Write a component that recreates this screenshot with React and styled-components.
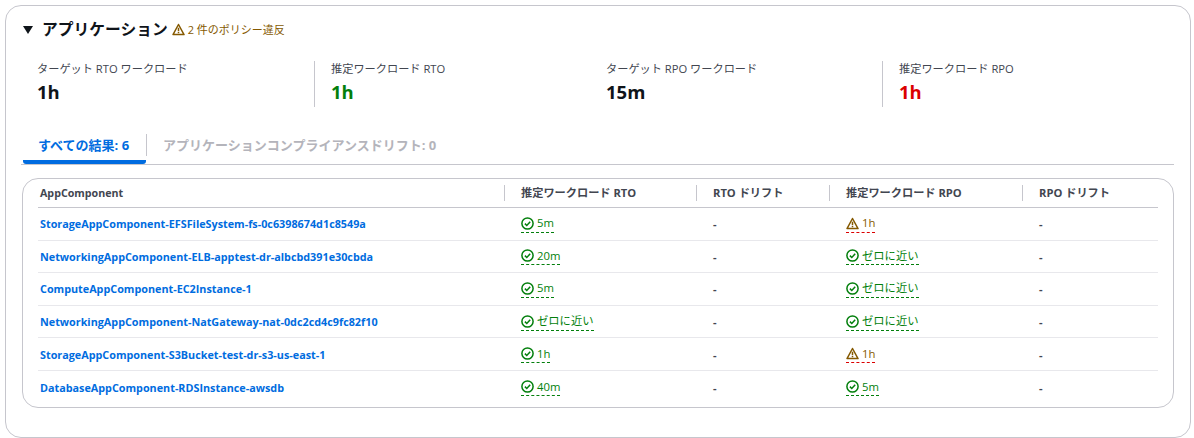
import React from 'react';
import styled, { createGlobalStyle } from 'styled-components';

const GlobalStyle = createGlobalStyle`
    html, body { margin: 0; padding: 0; background: #fff; }
    body {
        font-family: "Open Sans", "Noto Sans CJK JP", sans-serif;
        color: #0f141a;
    }
`;

const Card = styled.section`
    box-sizing: border-box;
    width: 1186px;
    height: 433px;
    margin: 5px 0 0 5px;
    padding: 13px 16px 0 16px;
    border: 1px solid #c6c6cd;
    border-radius: 16px;
`;

const Header = styled.header`
    display: flex;
    align-items: center;
    height: 20px;
`;

const Caret = styled.span`
    width: 0;
    height: 0;
    margin: 1px 9px 0 1px;
    border-left: 5px solid transparent;
    border-right: 5px solid transparent;
    border-top: 8px solid #0f141a;
`;

const Title = styled.h2`
    margin: 0 4px 0 0;
    font-size: 15.75px;
    font-weight: 700;
    line-height: 20px;
`;

const Violation = styled.span`
    display: flex;
    align-items: center;
    gap: 3px;
    font-size: 11px;
    color: #855900;
`;

const Metrics = styled.div`
    display: grid;
    grid-template-columns: 294px 275px 293px 1fr;
    margin: 22px 0 0 15px;
    height: 46px;
`;

const Metric = styled.div`
    box-sizing: border-box;
    height: 46px;
    padding-left: ${p => (p.$divided ? '16px' : '0')};
    border-left: ${p => (p.$divided ? '1px solid #c6c6cd' : 'none')};
    margin-left: ${p => (p.$divided ? '-17px' : '0')};
`;

const MetricLabel = styled.div`
    font-size: 11.2px;
    line-height: 16px;
    color: #424650;
    white-space: nowrap;
`;

const MetricValue = styled.div`
    margin-top: 4px;
    font-size: 18.5px;
    font-weight: 700;
    line-height: 22px;
    color: ${p => p.$color || '#0f141a'};
`;

const Tabs = styled.nav`
    display: flex;
    align-items: flex-start;
    height: 37px;
    margin: 20px 0 0 -1px;
    border-bottom: 1px solid #c6c6cd;
`;

const Tab = styled.div`
    box-sizing: border-box;
    height: 37px;
    margin-left: ${p => (p.$active ? '2px' : '0')};
    padding: 8px 16px 0;
    padding-left: ${p => (p.$active ? '15px' : '16px')};
    padding-right: ${p => (p.$active ? '17px' : '16px')};
    font-size: 13px;
    font-weight: 700;
    line-height: 20px;
    white-space: nowrap;
    color: ${p => (p.$active ? '#006ce0' : '#b4b4bb')};
    border-bottom: ${p => (p.$active ? '4px solid #006ce0' : 'none')};
    border-radius: ${p => (p.$active ? '0 0 3px 3px' : '0')};
`;

const TabDivider = styled.span`
    flex: none;
    width: 1px;
    height: 22px;
    margin-top: 7px;
    background: #c6c6cd;
`;

const TableBox = styled.div`
    box-sizing: border-box;
    width: 1152px;
    height: 230px;
    margin-top: 13px;
    padding: 0 15px;
    border: 1px solid #c6c6cd;
    border-radius: 16px;
`;

const columns = '466px 192px 133px 193px 1fr';

const HeadRow = styled.div`
    display: grid;
    grid-template-columns: ${columns};
    align-items: center;
    height: 28px;
    border-bottom: 1px solid #c6c6cd;
`;

const HeadCell = styled.div`
    box-sizing: border-box;
    height: 16px;
    padding-left: ${p => (p.$first ? '2px' : '16px')};
    border-left: ${p => (p.$first ? 'none' : '1px solid #c6c6cd')};
    font-size: ${p => (p.$first ? '10.7px' : '11.2px')};
    font-weight: 700;
    line-height: 16px;
    color: #424650;
    white-space: nowrap;
`;

const Row = styled.div`
    display: grid;
    grid-template-columns: ${columns};
    align-items: center;
    box-sizing: border-box;
    height: 32.6px;
    border-bottom: ${p => (p.$last ? 'none' : '1px solid #e8e8ec')};
`;

const Cell = styled.div`
    padding-left: ${p => (p.$first ? '2px' : '17px')};
    font-size: 11px;
    font-weight: ${p => (p.$dash ? 700 : 400)};
    color: #424650;
`;

const Link = styled.a`
    font-size: 10.8px;
    font-weight: 700;
    color: #006ce0;
    white-space: nowrap;
`;

const Status = styled.span`
    display: inline-flex;
    align-items: center;
    gap: 3px;
    height: 17px;
    font-size: 11.3px;
    line-height: 16px;
    color: ${p => (p.$warn ? '#855900' : '#037f0c')};
    border-bottom: 1px dashed ${p => (p.$warn ? '#db0000' : '#037f0c')};
`;

const CheckIcon = () => (
    <svg width="13" height="13" viewBox="0 0 13 13" fill="none" stroke="#037f0c" strokeWidth="1.5">
        <circle cx="6.5" cy="6.5" r="5.6" />
        <path d="M3.9 6.6 5.8 8.5 9.2 4.8" />
    </svg>
);

const WarnIcon = () => (
    <svg width="13" height="13" viewBox="0 0 13 13" fill="none" stroke="#855900" strokeWidth="1.5" strokeLinejoin="round">
        <path d="M6.5 1.5 12 11.6H1Z" />
        <path d="M6.5 4.8V8.3M6.5 9.1V10.3" />
    </svg>
);

const Result = ({ value, warn }) => (
    <Status $warn={warn}>
        {warn ? <WarnIcon /> : <CheckIcon />}
        {value}
    </Status>
);

const rows = [
    ['StorageAppComponent-EFSFileSystem-fs-0c6398674d1c8549a', '5m', false, '1h', true],
    ['NetworkingAppComponent-ELB-apptest-dr-albcbd391e30cbda', '20m', false, 'ゼロに近い', false],
    ['ComputeAppComponent-EC2Instance-1', '5m', false, 'ゼロに近い', false],
    ['NetworkingAppComponent-NatGateway-nat-0dc2cd4c9fc82f10', 'ゼロに近い', false, 'ゼロに近い', false],
    ['StorageAppComponent-S3Bucket-test-dr-s3-us-east-1', '1h', false, '1h', true],
    ['DatabaseAppComponent-RDSInstance-awsdb', '40m', false, '5m', false],
];

export default function App() {
    return (
        <>
            <GlobalStyle />
            <Card>
                <Header>
                    <Caret />
                    <Title>アプリケーション</Title>
                    <Violation><WarnIcon />2 件のポリシー違反</Violation>
                </Header>
                <Metrics>
                    <Metric>
                        <MetricLabel>ターゲット RTO ワークロード</MetricLabel>
                        <MetricValue>1h</MetricValue>
                    </Metric>
                    <Metric $divided>
                        <MetricLabel>推定ワークロード RTO</MetricLabel>
                        <MetricValue $color="#037f0c">1h</MetricValue>
                    </Metric>
                    <Metric>
                        <MetricLabel>ターゲット RPO ワークロード</MetricLabel>
                        <MetricValue>15m</MetricValue>
                    </Metric>
                    <Metric $divided>
                        <MetricLabel>推定ワークロード RPO</MetricLabel>
                        <MetricValue $color="#db0000">1h</MetricValue>
                    </Metric>
                </Metrics>
                <Tabs>
                    <Tab $active>すべての結果: 6</Tab>
                    <TabDivider />
                    <Tab>アプリケーションコンプライアンスドリフト: 0</Tab>
                </Tabs>
                <TableBox>
                    <HeadRow>
                        <HeadCell $first>AppComponent</HeadCell>
                        <HeadCell>推定ワークロード RTO</HeadCell>
                        <HeadCell>RTO ドリフト</HeadCell>
                        <HeadCell>推定ワークロード RPO</HeadCell>
                        <HeadCell>RPO ドリフト</HeadCell>
                    </HeadRow>
                    {rows.map((r, i) => (
                        <Row key={r[0]} $last={i === rows.length - 1}>
                            <Cell $first><Link>{r[0]}</Link></Cell>
                            <Cell><Result value={r[1]} warn={r[2]} /></Cell>
                            <Cell $dash>-</Cell>
                            <Cell><Result value={r[3]} warn={r[4]} /></Cell>
                            <Cell $dash>-</Cell>
                        </Row>
                    ))}
                </TableBox>
            </Card>
        </>
    );
}
